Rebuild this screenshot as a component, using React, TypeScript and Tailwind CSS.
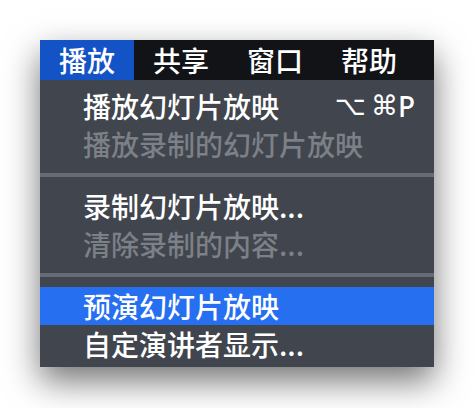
import React from "react";

const font = { fontFamily: '"Noto Sans CJK SC", "Noto Sans", sans-serif' };

function Item({ label, disabled, active, shortcut }: { label: string; disabled?: boolean; active?: boolean; shortcut?: boolean }) {
  return (
    <div
      className={`flex h-[38px] items-center justify-between pl-[43px] pr-[19px] text-[28px] leading-[38px] font-medium ${
        active ? "bg-[#256ff0] text-white" : disabled ? "text-[#7c8087]" : "text-white"
      }`}
    >
      <span>{label}</span>
      {shortcut && (
        <span className="flex items-center text-[27px]" style={{ fontFamily: '"DejaVu Sans", "Noto Sans", sans-serif' }}>
          <span className="mr-[5px]">⌥</span>
          <span>⌘</span>
          <span className="text-[28px]" style={{ fontFamily: '"Noto Sans", sans-serif' }}>P</span>
        </span>
      )}
    </div>
  );
}

function Sep() {
  return (
    <div className="py-[10px]">
      <div className="h-[4px] bg-[#676b73]" />
    </div>
  );
}

export default function App() {
  const bar = ["播放", "共享", "窗口", "帮助"];
  return (
    <div className="w-[474px] h-[408px] bg-white pt-[40px] pl-[40px]" style={font}>
      <div className="w-[394px] bg-[#41454d] shadow-[0_14px_32px_rgba(0,0,0,0.55)]">
        <div className="flex h-[40px] bg-[#111317] text-white text-[28px] leading-[40px] font-medium">
          {bar.map((b, i) => (
            <div key={b} className={`w-[94px] pl-[19px] ${i === 0 ? "bg-[#1453c6]" : ""}`}>
              {b}
            </div>
          ))}
        </div>
        <div className="pt-[7px] pb-[4px]">
          <Item label="播放幻灯片放映" shortcut />
          <Item label="播放录制的幻灯片放映" disabled />
          <Sep />
          <Item label="录制幻灯片放映..." />
          <Item label="清除录制的内容..." disabled />
          <Sep />
          <Item label="预演幻灯片放映" active />
          <Item label="自定演讲者显示..." />
        </div>
      </div>
    </div>
  );
}
